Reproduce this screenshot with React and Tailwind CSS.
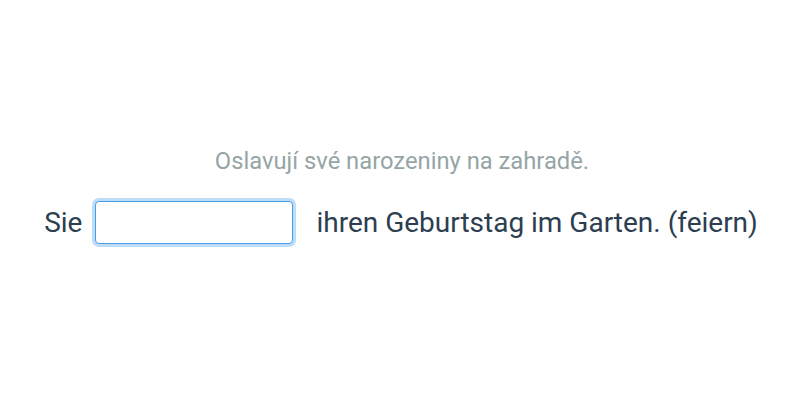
import React from "react";

export default function App() {
  return (
    <div
      className="w-full h-[400px] bg-white flex flex-col items-center pt-[149px]"
      style={{ fontFamily: "Roboto, 'Noto Sans', sans-serif" }}
    >
      <p className="text-[23.75px] text-[#95a5a6] leading-[24px] mb-[28px] ml-[4px]">
        Oslavují své narozeniny na zahradě.
      </p>
      <div className="flex items-center text-[28px] text-[#2c3e50] leading-none ml-[2px]">
        <span>Sie</span>
        <input
          type="text"
          className="ml-[13px] mr-[23px] w-[198px] h-[43px] rounded-[4px] border border-[#4a9ee6] outline-none ring-[3px] ring-[#bcdcf7] bg-white px-2 text-[20px]"
        />
        <span>ihren Geburtstag im Garten. (feiern)</span>
      </div>
    </div>
  );
}
